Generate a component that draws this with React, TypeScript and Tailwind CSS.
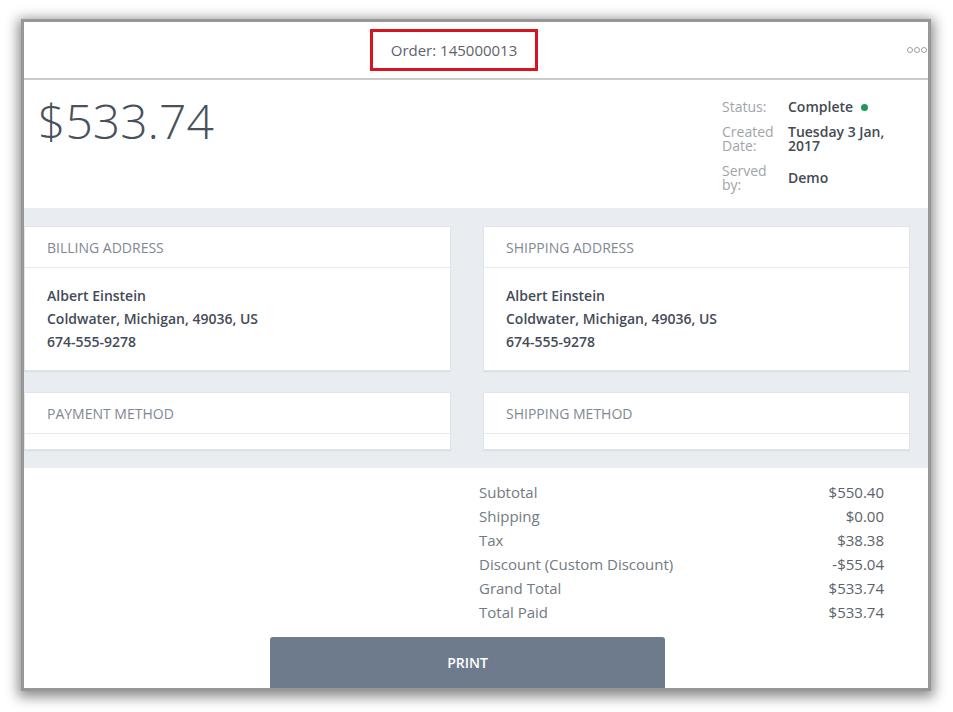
import React from "react";

const font = { fontFamily: '"Open Sans", "Liberation Sans", sans-serif' };

function Card({ title, children, bodyClass }: { title: string; children?: React.ReactNode; bodyClass: string }) {
  return (
    <div className="bg-white border border-[#e1e5ea] shadow-[0_1px_1px_rgba(0,0,0,0.06)]">
      <div className="h-[41px] flex items-center px-[22px] text-[14px] text-[#7f8893] border-b border-[#e6e9ed]">{title}</div>
      <div className={bodyClass}>{children}</div>
    </div>
  );
}

function Address() {
  return (
    <div className="text-[14px] leading-[23px] font-semibold text-[#444b56]">
      <div>Albert Einstein</div>
      <div>Coldwater, Michigan, 49036, US</div>
      <div>674-555-9278</div>
    </div>
  );
}

export default function App() {
  const totals: [string, string][] = [
    ["Subtotal", "$550.40"],
    ["Shipping", "$0.00"],
    ["Tax", "$38.38"],
    ["Discount (Custom Discount)", "-$55.04"],
    ["Grand Total", "$533.74"],
    ["Total Paid", "$533.74"],
  ];
  return (
    <div className="w-[953px] h-[712px] bg-white pt-[22px] pl-[24px]" style={font}>
      <div className="w-[904px] h-[666px] bg-white flex flex-col overflow-hidden shadow-[0_0_0_3px_#979797,0_3px_12px_6px_rgba(0,0,0,0.45)]">
        {/* header */}
        <div className="h-[58px] shrink-0 flex items-center border-b-2 border-[#c9cbcd]">
          <div className="ml-[346px] w-[168px] h-[42px] border-[3px] border-[#d7141f] flex items-center justify-center text-[15px] text-[#5d636b]">
            Order: 145000013
          </div>
          <div className="ml-auto mr-[1px] flex gap-[1px]">
            <span className="w-[6px] h-[6px] rounded-full border border-[#9ba0a6]" />
            <span className="w-[6px] h-[6px] rounded-full border border-[#9ba0a6]" />
            <span className="w-[6px] h-[6px] rounded-full border border-[#9ba0a6]" />
          </div>
        </div>
        {/* summary */}
        <div className="h-[128px] shrink-0 flex">
          <div className="pl-[14px] pt-[17px] text-[48px] leading-[48px] font-light text-[#48525c]">$533.74</div>
          <div className="ml-auto mr-[16px] pt-[20px] flex flex-col gap-[11px] text-[14px] leading-[14px]">
            <div className="flex items-center">
              <div className="w-[66px] text-[#a0a5ab]">Status:</div>
              <div className="w-[124px] font-semibold text-[#444a52] flex items-center gap-[8px]">
                Complete <span className="w-[7px] h-[7px] rounded-full bg-[#1d9a5a]" />
              </div>
            </div>
            <div className="flex items-center">
              <div className="w-[66px] text-[#a0a5ab]">Created<br />Date:</div>
              <div className="w-[124px] font-semibold text-[#444a52]">Tuesday 3 Jan,<br />2017</div>
            </div>
            <div className="flex items-center">
              <div className="w-[66px] text-[#a0a5ab]">Served<br />by:</div>
              <div className="w-[124px] font-semibold text-[#444a52]">Demo</div>
            </div>
          </div>
        </div>
        {/* gray area */}
        <div className="h-[260px] shrink-0 bg-[#e9edf1] pt-[18px] pr-[18px] grid grid-cols-2 gap-x-[32px] gap-y-[21px] content-start">
          <Card title="BILLING ADDRESS" bodyClass="h-[102px] px-[22px] pt-[16px]"><Address /></Card>
          <Card title="SHIPPING ADDRESS" bodyClass="h-[102px] px-[22px] pt-[16px]"><Address /></Card>
          <Card title="PAYMENT METHOD" bodyClass="h-[15px]" />
          <Card title="SHIPPING METHOD" bodyClass="h-[15px]" />
        </div>
        {/* totals */}
        <div className="flex-1 flex flex-col">
          <div className="ml-[455px] w-[405px] pt-[12px] text-[15px] leading-[24px]">
            {totals.map(([l, v]) => (
              <div key={l} className="flex justify-between">
                <span className="text-[#727a83]">{l}</span>
                <span className="text-[#5b626a]">{v}</span>
              </div>
            ))}
          </div>
          <div className="mt-auto ml-[246px] w-[395px] h-[51px] bg-[#6e7b8c] rounded-t-[3px] flex items-center justify-center text-white text-[14px] font-semibold">
            PRINT
          </div>
        </div>
      </div>
    </div>
  );
}
